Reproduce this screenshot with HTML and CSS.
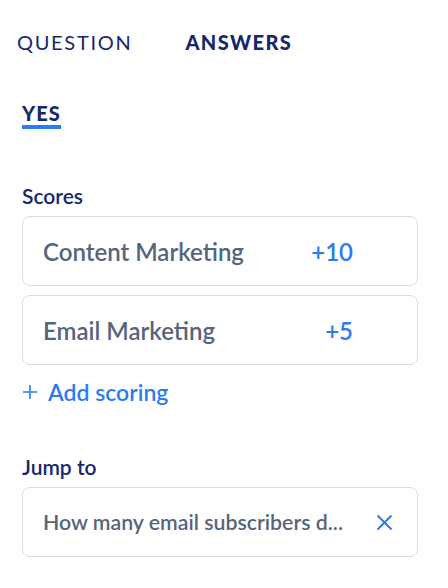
FILE: index.html
```html
<!DOCTYPE html>
<html lang="en">
<head>
    <meta charset="UTF-8">
    <meta name="viewport" content="width=device-width, initial-scale=1.0">
    <title>Answer settings</title>
    <link rel="stylesheet" href="styles.css">
</head>
<body>
    <div class="panel">
        <div class="tabs">
            <span class="tab">QUESTION</span>
            <span class="tab active">ANSWERS</span>
        </div>

        <div class="answer-tabs">
            <span class="answer-tab active">YES</span>
        </div>

        <div class="section">
            <div class="section-label">Scores</div>
            <div class="score-row">
                <span class="score-name">Content Marketing</span>
                <span class="score-value">+10</span>
            </div>
            <div class="score-row">
                <span class="score-name">Email Marketing</span>
                <span class="score-value">+5</span>
            </div>
            <div class="add-link">
                <svg class="plus" width="16" height="16" viewBox="0 0 16 16">
                    <path d="M8 1v14M1 8h14" stroke="currentColor" stroke-width="1.6" fill="none"/>
                </svg>
                <span>Add scoring</span>
            </div>
        </div>

        <div class="section jump">
            <div class="section-label">Jump to</div>
            <div class="jump-box">
                <span class="jump-text">How many email subscribers d...</span>
                <svg class="clear" width="17" height="17" viewBox="0 0 17 17">
                    <path d="M1.5 1.5l14 14M15.5 1.5l-14 14" stroke="currentColor" stroke-width="2" fill="none"/>
                </svg>
            </div>
        </div>
    </div>
</body>
</html>
```

FILE: styles.css
```css
body {
    margin: 0;
    font-family: Lato, "Open Sans", sans-serif;
    background-color: #fff;
}
.panel {
    padding: 0 30px 0 22px;
}
.tabs {
    display: flex;
    gap: 53px;
    padding-top: 30px;
    margin-left: -5px;
}
.tab {
    font-size: 20px;
    letter-spacing: 1.7px;
    color: #16286a;
    line-height: 24px;
}
.tab.active {
    font-weight: 900;
    letter-spacing: 1.4px;
}
.answer-tabs {
    margin-top: 48px;
}
.answer-tab {
    display: inline-block;
    font-size: 20px;
    font-weight: 900;
    letter-spacing: 1px;
    color: #16286a;
    line-height: 22px;
    padding-bottom: 1px;
    border-bottom: 4px solid #2b7bf2;
}
.section {
    margin-top: 55px;
}
.section-label {
    font-size: 21px;
    font-weight: 600;
    color: #16286a;
    line-height: 24px;
    margin-bottom: 8px;
}
.score-row {
    display: flex;
    align-items: center;
    height: 68px;
    border: 1px solid #d6dce7;
    border-radius: 8px;
    padding: 0 64px 0 20px;
    margin-bottom: 9px;
}
.score-name {
    flex: 1;
    font-size: 24px;
    font-weight: 600;
    color: #56657c;
}
.score-value {
    font-size: 24px;
    font-weight: 600;
    color: #2b7bf2;
}
.add-link {
    display: flex;
    align-items: center;
    gap: 10px;
    color: #2b7bf2;
    font-size: 23px;
    font-weight: 600;
    height: 36px;
}
.jump {
    margin-top: 45px;
}
.jump-box {
    display: flex;
    align-items: center;
    height: 68px;
    border: 1px solid #d6dce7;
    border-radius: 8px;
    padding: 0 24px 0 20px;
}
.jump-text {
    flex: 1;
    font-size: 21.3px;
    font-weight: 600;
    color: #56657c;
    white-space: nowrap;
}
.clear {
    color: #2b7bf2;
}
```
